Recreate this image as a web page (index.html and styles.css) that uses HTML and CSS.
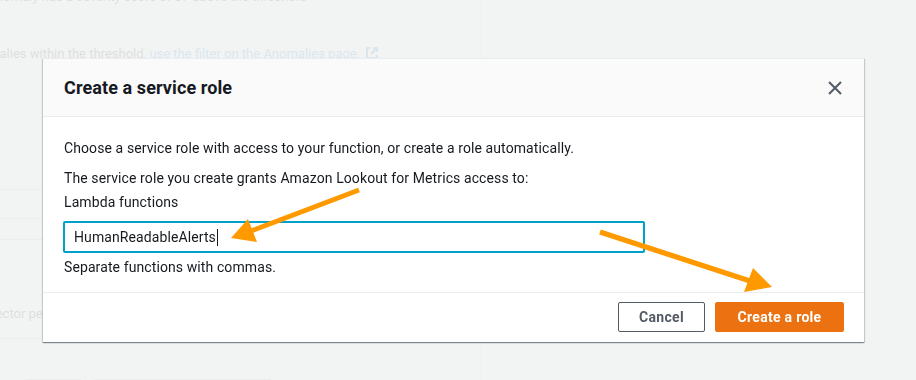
FILE: index.html
```html
<!DOCTYPE html>
<html lang="en">
<head>
  <meta charset="UTF-8" />
  <meta name="viewport" content="width=device-width, initial-scale=1.0" />
  <title>Create a service role</title>
  <link rel="stylesheet" href="styles.css">
</head>
<body>
  <!-- page behind the dialog -->
  <div class="page">
    <main class="main">
      <p class="alert-line">The anomaly has a severity score of 87 above the threshold</p>
      <p class="alert-line second">To see anomalies within the threshold, <a href="#">use the filter on the Anomalies page.</a>
        <svg class="ext" width="14" height="14" viewBox="0 0 14 14"><path d="M5 2H2v10h10V9M8 2h4v4M12 2L6 8" fill="none" stroke="currentColor" stroke-width="2"/></svg>
      </p>
      <div class="table">
        <div class="row"></div>
        <div class="row"></div>
        <div class="row"></div>
      </div>
      <p class="detector">Detector period</p>
      <div class="rule"></div>
      <div class="page-actions">
        <span class="ghost small"></span>
        <span class="ghost wide"></span>
      </div>
    </main>
    <aside class="side"></aside>
  </div>

  <div class="overlay">
    <div class="modal">
      <div class="modal-header">
        <h2>Create a service role</h2>
        <button class="close" aria-label="Close">
          <svg width="16" height="16" viewBox="0 0 16 16"><path d="M2 2l12 12M14 2L2 14" stroke="#545b64" stroke-width="2" fill="none"/></svg>
        </button>
      </div>
      <div class="modal-body">
        <p class="intro">Choose a service role with access to your function, or create a role automatically.</p>
        <p class="grants">The service role you create grants Amazon Lookout for Metrics access to:</p>
        <label class="field-label">Lambda functions</label>
        <div class="text-input">HumanReadableAlerts<span class="caret"></span></div>
        <p class="hint">Separate functions with commas.</p>
      </div>
      <div class="modal-footer">
        <button class="btn btn-normal">Cancel</button>
        <button class="btn btn-primary">Create a role</button>
      </div>
    </div>
  </div>

  <svg class="arrows" width="916" height="380" viewBox="0 0 916 380">
    <line x1="359" y1="190" x2="251" y2="231" stroke="#ff9900" stroke-width="5"/>
    <polygon points="231,238 248,219 257,242" fill="#ff9900"/>
    <line x1="600" y1="232" x2="750" y2="281" stroke="#ff9900" stroke-width="5"/>
    <polygon points="772,287 753,268 744,292" fill="#ff9900"/>
  </svg>
</body>
</html>
```

FILE: styles.css
```css
* {
  box-sizing: border-box;
}

body {
  margin: 0;
  font-family: Roboto, "Helvetica Neue", Arial, sans-serif;
  font-size: 14px;
  line-height: 22px;
  color: #16191f;
  background: #f2f3f3;
  width: 916px;
  height: 380px;
  overflow: hidden;
}

/* background page */
.page {
  display: flex;
  height: 380px;
  overflow: hidden;
}

.main {
  width: 577px;
  flex-shrink: 0;
  margin-left: -96px;
  border-right: 1px solid #d5dbdb;
  font-size: 13px;
}

.main p {
  margin: 0;
}

.alert-line {
  margin-top: -14px !important;
  white-space: nowrap;
  padding-left: 60px;
}
.alert-line.second {
  margin-top: 35px !important;
  padding-left: 21px;
}
.alert-line a {
  color: #0073bb;
  text-decoration: none;
}
.ext {
  color: #0073bb;
  vertical-align: -2px;
  margin-left: 2px;
}

.table {
  margin-top: 124px;
}
.table .row {
  border-top: 1px solid #aab7b8;
  height: 29px;
}
.table .row:nth-child(2) {
  height: 21px;
}

.detector {
  margin-top: 35px !important;
  padding-left: 72px;
}
.rule {
  margin-top: 13px;
  border-top: 1px solid #aab7b8;
}
.page-actions {
  display: flex;
  gap: 11px;
  margin-top: 40px;
  padding-left: 121px;
}
.ghost {
  height: 30px;
  border: 1px solid #aab7b8;
  border-radius: 2px;
}
.ghost.small { width: 57px; }
.ghost.wide { width: 179px; }

.side {
  flex: 1;
}

/* dialog */
.overlay {
  position: fixed;
  inset: 0;
  background: rgba(242, 243, 243, 0.9);
  padding: 58px 0 0 43px;
}

.modal {
  width: 821px;
  height: 284px;
  background: #fff;
  letter-spacing: 0.1px;
  border-top: 1px solid #eaeded;
  box-shadow: 0 1px 1px 0 rgba(0, 28, 36, 0.3), 1px 1px 1px 0 rgba(0, 28, 36, 0.15), -1px 1px 1px 0 rgba(0, 28, 36, 0.15);
  display: flex;
  flex-direction: column;
}

.modal-header {
  height: 58px;
  background: #fafafa;
  border-bottom: 1px solid #eaeded;
  display: flex;
  align-items: center;
  justify-content: space-between;
  padding: 0 20px 0 21px;
}
.modal-header h2 {
  margin: 0;
  font-size: 18px;
  font-weight: 700;
  line-height: 22px;
}
.close {
  border: none;
  background: none;
  padding: 0;
  width: 18px;
  height: 18px;
  display: flex;
  align-items: center;
  justify-content: center;
}

.modal-body {
  flex: 1;
  padding: 20px 21px 14px;
  border-bottom: 1px solid #eaeded;
}
.modal-body p {
  margin: 0;
}
.grants {
  margin-top: 8px !important;
}
.field-label {
  display: block;
  margin-top: 2px;
}
.text-input {
  margin-top: 8px;
  margin-left: -1px;
  width: 582px;
  height: 32px;
  border: 2px solid #00a1c9;
  border-radius: 2px;
  padding: 0 9px;
  display: flex;
  align-items: center;
}
.caret {
  display: inline-block;
  width: 1px;
  height: 17px;
  background: #16191f;
  margin-left: 1px;
}
.hint {
  margin-top: 3px !important;
}

.modal-footer {
  height: 49px;
  display: flex;
  align-items: center;
  justify-content: flex-end;
  gap: 10px;
  padding: 0 20px 1px;
}
.btn {
  height: 30px;
  font-family: inherit;
  font-size: 14px;
  font-weight: 700;
  letter-spacing: 0.3px;
  border-radius: 2px;
  padding: 0 10px;
  cursor: pointer;
}
.btn-normal {
  background: #fff;
  color: #545b64;
  border: 1px solid #545b64;
  width: 87px;
}
.btn-primary {
  background: #ec7211;
  color: #fff;
  border: 1px solid #ec7211;
  width: 129px;
}

.arrows {
  position: fixed;
  left: 0;
  top: 0;
  pointer-events: none;
}
```
